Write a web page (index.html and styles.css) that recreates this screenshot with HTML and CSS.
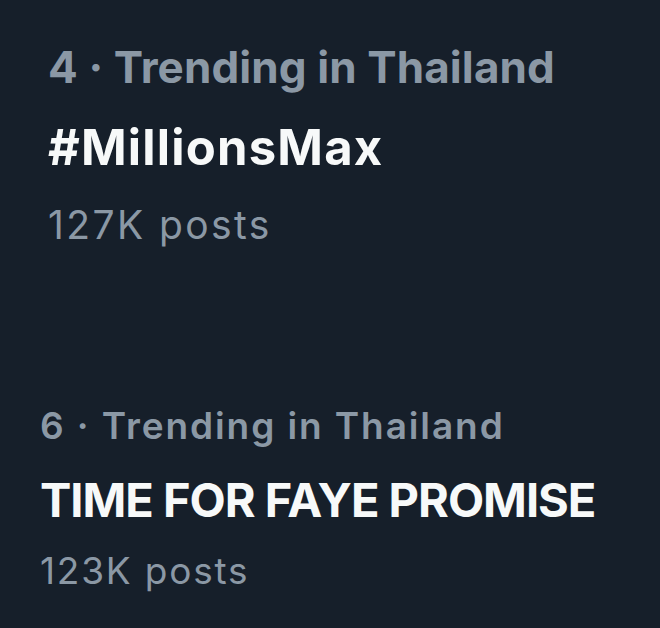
FILE: index.html
```html
<!DOCTYPE html>
<html lang="en">
    <head>
        <title>Trending in Thailand</title>
        <link rel="stylesheet" href="styles.css">
    </head>
    <body>
        <div class="trend trend-first">
            <div class="meta">4 · Trending in Thailand</div>
            <div class="topic">#MillionsMax</div>
            <div class="count">127K posts</div>
        </div>
        <div class="trend trend-second">
            <div class="meta">6 · Trending in Thailand</div>
            <div class="topic">TIME FOR FAYE PROMISE</div>
            <div class="count">123K posts</div>
        </div>
    </body>
</html>
```

FILE: styles.css
```css
:root {
    --bg: #161f2a;
    --muted: #8b98a5;
    --text: #f7f9f9;
}

html, body {
    margin: 0;
    height: 100%;
    background: var(--bg);
}

body {
    font-family: Inter, "Noto Sans", sans-serif;
    display: flex;
    flex-direction: column;
}

.trend {
    display: flex;
    flex-direction: column;
}

.meta {
    color: var(--muted);
    font-weight: 700;
}

.topic {
    color: var(--text);
    font-weight: 700;
}

.count {
    color: var(--muted);
    font-weight: 400;
}

/** first trend */
.trend-first {
    padding: 41px 0 0 48px;
}

.trend-first .meta {
    font-size: 44px;
    line-height: 52px;
    letter-spacing: 0.1px;
}

.trend-first .topic {
    font-size: 49px;
    line-height: 58px;
    margin-top: 26px;
    letter-spacing: 1.2px;
}

.trend-first .count {
    font-size: 39px;
    line-height: 48px;
    margin-top: 24px;
    letter-spacing: 2.4px;
}

/** second trend */
.trend-second {
    padding: 153px 0 0 40px;
}

.trend-second .meta {
    font-size: 37px;
    line-height: 48px;
    font-weight: 600;
    letter-spacing: 1.9px;
}

.trend-second .topic {
    font-size: 47px;
    line-height: 58px;
    margin-top: 21px;
    letter-spacing: -1px;
}

.trend-second .count {
    font-size: 37px;
    line-height: 48px;
    margin-top: 18px;
    letter-spacing: 1.8px;
}
```
